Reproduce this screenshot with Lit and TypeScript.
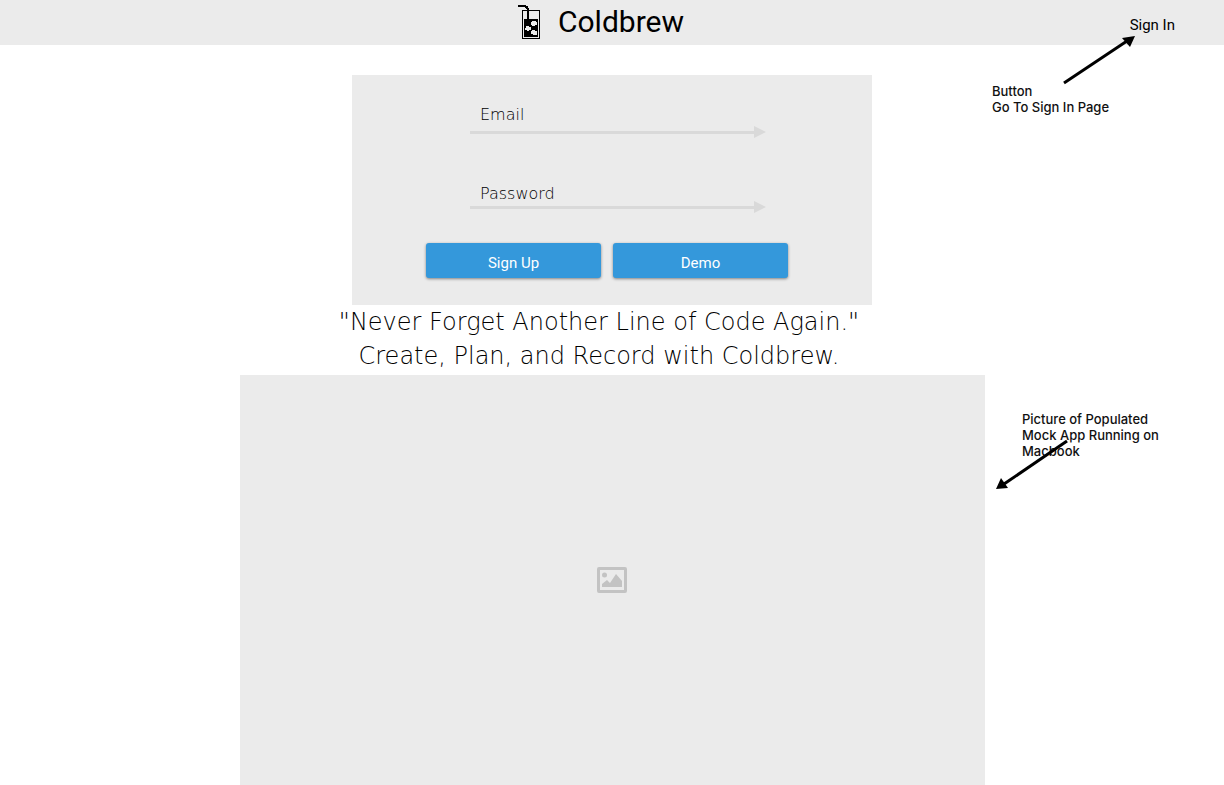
import { LitElement, html, css, svg } from "lit";
import { customElement, property } from "lit/decorators.js";

@customElement("line-field")
class LineField extends LitElement {
  @property() label = "";
  @property() type = "text";

  static styles = css`
    :host {
      display: block;
    }
    .row {
      display: flex;
      align-items: center;
      height: 24px;
      padding: 0 0 0 10px;
      gap: 8px;
      font-family: "DejaVu Sans", sans-serif;
      font-size: 16px;
      font-weight: 200;
      color: #000;
    }
    :host([snug]) .row {
      height: 16px;
    }
    .input {
      flex: 1;
      width: 0;
      min-width: 0;
      height: 100%;
      box-sizing: border-box;
      padding: 0;
      border: 0;
      outline: 0;
      background: transparent;
      font: inherit;
      color: inherit;
    }
    .rule {
      display: flex;
      align-items: center;
      height: 12px;
    }
    .line {
      flex: 1;
      height: 3px;
      background: #d9d9d9;
    }
    .tip {
      display: block;
      width: 12px;
      height: 12px;
      fill: #d9d9d9;
    }
  `;

  render() {
    return html`
      <div class="row">
        <label for="box">${this.label}</label>
        <input class="input" id="box" type=${this.type} />
      </div>
      <div class="rule">
        <span class="line"></span>
        <svg class="tip" viewBox="0 0 12 12"><path d="M0 0 12 6 0 12Z" /></svg>
      </div>
    `;
  }
}

const glass = svg`
  <path d="M0 0h8v1h2v2h1v11h-2V4H8V3H7V2H0Z" />
  <path fill-rule="evenodd" d="M4 5h18v29H4ZM5 6v27h16V6Z" />
  <path d="M6 14h14v18H6Z" />
  <path fill="#ebebeb" d="M14 16h4v1h1v3h-2v1h-3v-1h-1v-3h1ZM8 21h3v1h2v3h-2v1H9v-1H7v-2h1ZM14 25h3v1h2v4h-4v-1h-2v-3h1Z" />
`;

@customElement("app-root")
class AppRoot extends LitElement {
  static styles = css`
    :host {
      display: block;
      position: relative;
      min-height: 100vh;
      overflow: hidden;
      background: #fff;
      color: #000;
      font-family: "DejaVu Sans", sans-serif;
    }
    .bar {
      box-sizing: border-box;
      display: grid;
      grid-template-columns: 1fr auto 1fr;
      align-items: center;
      height: 45px;
      padding: 0 49px 2px 27px;
      background: #ebebeb;
      font-family: Roboto, sans-serif;
    }
    .brand {
      grid-column: 2;
      display: flex;
      align-items: center;
      gap: 18px;
      font-size: 30px;
      line-height: 43px;
    }
    .glass {
      display: block;
      width: 22px;
      height: 34px;
    }
    .signin {
      justify-self: end;
      padding-top: 6px;
      font-size: 15px;
      line-height: 20px;
      color: #000;
      text-decoration: none;
    }
    .main {
      display: flex;
      flex-direction: column;
      align-items: center;
      padding-top: 30px;
    }
    .card {
      box-sizing: border-box;
      width: 100%;
      max-width: 520px;
      padding: 27px 84px 27px 74px;
      background: #ebebeb;
    }
    .fields {
      display: grid;
      grid-template-columns: minmax(0, 1fr);
      gap: 47px;
      padding: 0 22px 0 44px;
    }
    .buttons {
      display: grid;
      grid-template-columns: 1fr 1fr;
      gap: 12px;
      margin-top: 30px;
    }
    .button {
      height: 35px;
      padding: 4px 0 0;
      border: 0;
      border-radius: 3px;
      background: #3498db;
      box-shadow: 0 1px 3px rgba(0, 0, 0, 0.45);
      color: #fff;
      font-family: Roboto, sans-serif;
      font-size: 15px;
    }
    .tagline {
      margin: 0;
      padding-right: 26px;
      font-size: 24px;
      font-weight: 200;
      line-height: 34px;
      text-align: center;
    }
    .shot {
      display: flex;
      align-items: center;
      justify-content: center;
      width: 100%;
      max-width: 745px;
      height: 410px;
      margin-top: 2px;
      background: #ebebeb;
    }
    .picture {
      width: 30px;
      height: 26px;
      fill: #c3c3c3;
    }
    .note {
      position: absolute;
      margin: 0;
      font-family: Inter, sans-serif;
      font-size: 13px;
      font-weight: 500;
      line-height: 16px;
      color: #111;
    }
    .note-signin {
      top: 83px;
      left: 992px;
    }
    .note-shot {
      top: 411px;
      left: 1022px;
    }
    .arrow {
      position: absolute;
      width: 76px;
      height: 52px;
      pointer-events: none;
    }
    .arrow-signin {
      top: 34px;
      left: 1061px;
    }
    .arrow-shot {
      top: 439px;
      left: 994px;
    }
  `;

  render() {
    return html`
      <header class="bar">
        <div class="brand">
          <svg class="glass" viewBox="0 0 22 34" shape-rendering="crispEdges">${glass}</svg>
          <span>Coldbrew</span>
        </div>
        <a class="signin" href="#signin">Sign In</a>
      </header>
      <main class="main">
        <form class="card">
          <div class="fields">
            <line-field label="Email" type="email"></line-field>
            <line-field snug label="Password" type="password"></line-field>
          </div>
          <div class="buttons">
            <button class="button" type="button">Sign Up</button>
            <button class="button" type="button">Demo</button>
          </div>
        </form>
        <p class="tagline">
          "Never Forget Another Line of Code Again."<br />
          Create, Plan, and Record with Coldbrew.
        </p>
        <div class="shot">
          <svg class="picture" viewBox="0 0 30 26">
            <path fill-rule="evenodd" d="M2 0h26q2 0 2 2v22q0 2-2 2H2q-2 0-2-2V2q0-2 2-2ZM3 3v20h24V3Z" />
            <circle cx="7.500" cy="8" r="2.500" />
            <path d="M5 20v-3l5-4 3 3 6-9 6 7v6Z" />
          </svg>
        </div>
      </main>
      <p class="note note-signin">Button<br />Go To Sign In Page</p>
      <svg class="arrow arrow-signin" viewBox="0 0 76 52">
        <path d="M3 49 66 7" stroke="#000" stroke-width="3" />
        <path d="M74 2 61 4 69 13Z" />
      </svg>
      <p class="note note-shot">Picture of Populated<br />Mock App Running on<br />Macbook</p>
      <svg class="arrow arrow-shot" viewBox="0 0 76 52">
        <path d="M73 2 10 45" stroke="#000" stroke-width="3" />
        <path d="M2 50 7 39 14 49Z" />
      </svg>
    `;
  }
}
